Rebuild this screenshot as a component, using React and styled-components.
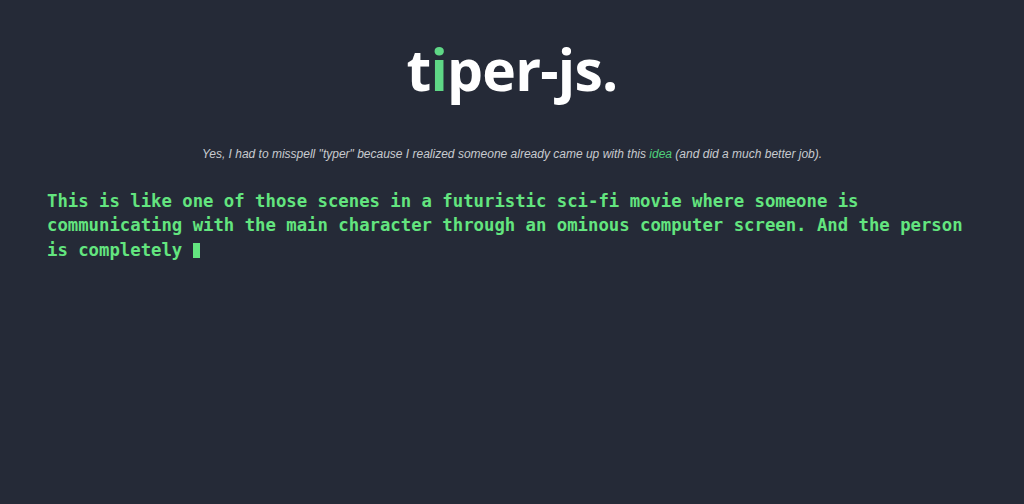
import React from "react";
import styled, { createGlobalStyle } from "styled-components";

const Global = createGlobalStyle`
  html, body { margin: 0; padding: 0; background: #252a37; }
  body { min-height: 504px; }
`;

const Page = styled.main`
  min-height: 504px;
  background: #252a37;
  display: flex;
  flex-direction: column;
  align-items: stretch;
  padding: 31px 47px 0;
  box-sizing: border-box;
`;

const Logo = styled.h1`
  margin: 0;
  text-align: center;
  font-family: "Open Sans", sans-serif;
  font-weight: 700;
  font-size: 57px;
  line-height: 76px;
  color: #ffffff;
  letter-spacing: -0.8px;
`;

const GreenI = styled.span`
  color: #5fd786;
`;

const Note = styled.p`
  margin: 40px 0 0;
  text-align: center;
  font-family: "Liberation Sans", Arial, sans-serif;
  font-style: italic;
  font-size: 12px;
  line-height: 14px;
  color: #c8cacf;
`;

const Link = styled.a`
  color: #4fd17c;
  text-decoration: none;
`;

const Terminal = styled.p`
  margin: 28px 0 0;
  font-family: "DejaVu Sans Mono", monospace;
  font-weight: bold;
  font-size: 17.3px;
  line-height: 24.3px;
  color: #63e57f;
  white-space: pre-wrap;
  max-width: 930px;
`;

const Cursor = styled.span`
  display: inline-block;
  width: 7px;
  height: 15px;
  background: #63e57f;
  vertical-align: -2px;
`;

export default function App() {
  return (
    <>
      <Global />
      <Page>
        <Logo>
          t<GreenI>i</GreenI>per-js.
        </Logo>
        <Note>
          Yes, I had to misspell "typer" because I realized someone already came up with this{" "}
          <Link href="#">idea</Link> (and did a much better job).
        </Note>
        <Terminal>
          This is like one of those scenes in a futuristic sci-fi movie where someone is
          communicating with the main character through an ominous computer screen. And the person
          is completely <Cursor />
        </Terminal>
      </Page>
    </>
  );
}
